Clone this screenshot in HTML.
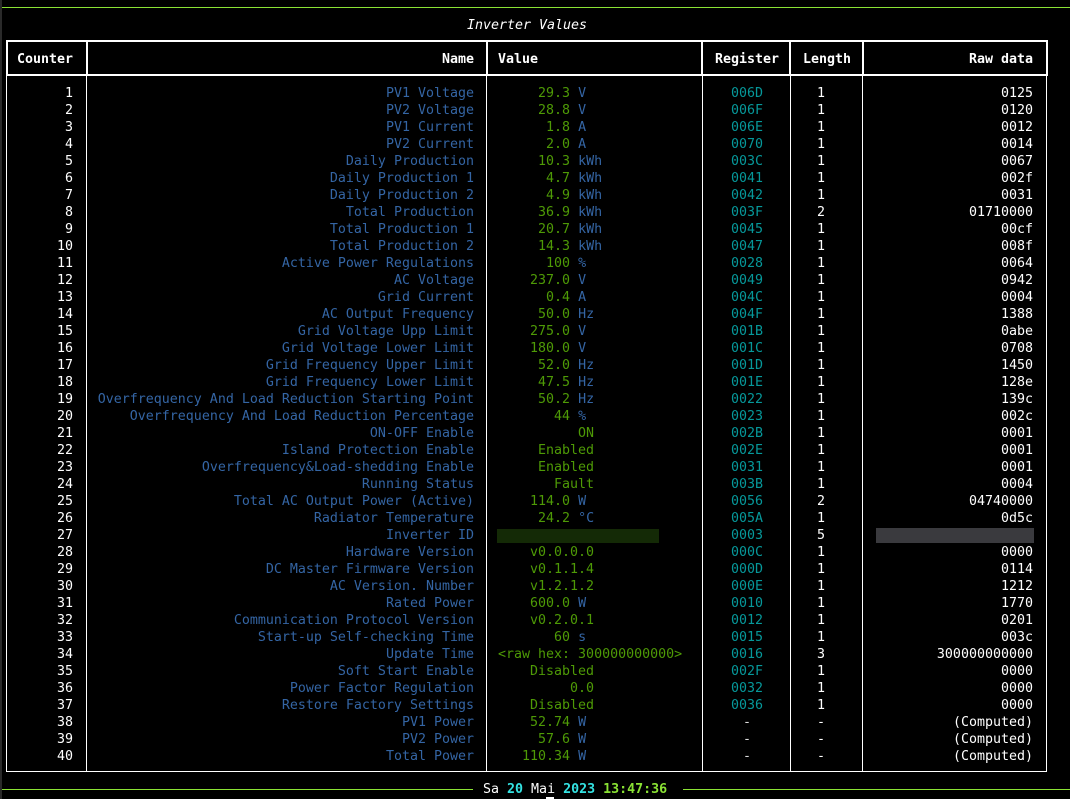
<!DOCTYPE html>
<html><head><meta charset="utf-8"><style>
html,body{margin:0;padding:0;background:#000;width:1070px;height:799px;overflow:hidden;}
body{position:relative;font-family:"DejaVu Sans Mono","Liberation Mono",monospace;font-size:13.3px;color:#fff;}
.a{position:absolute;white-space:pre;line-height:17px;}
#rows{position:absolute;left:0;top:85px;width:1070px;}
.r{position:relative;height:17px;}
.r span{position:absolute;top:0;white-space:pre;line-height:17px;}
.c{right:997px;color:#fff;}
.n{right:596px;color:#3465a4;}
.v{left:498px;color:#4e9a06;}
.v b{font-weight:normal;color:#3465a4;}
.g{left:703px;width:88px;text-align:center;color:#06989a;}
.l{left:791px;width:60px;text-align:center;color:#fff;}
.w{right:37px;color:#fff;}
.box{position:absolute;border:2px solid #fff;box-sizing:border-box;}
.vl{position:absolute;background:#fff;}
</style></head><body>
<div style="position:absolute;left:0;top:0;width:2px;height:799px;background:#2a2a2a"></div>
<div style="position:absolute;left:2px;top:7px;width:1068px;height:1px;background:#8ae234"></div>
<div class="a" style="left:0;width:1054px;top:17px;text-align:center;font-style:italic">Inverter Values</div>

<div class="box" style="left:6px;top:40px;width:1042px;height:36px"></div>
<div class="vl" style="left:86px;top:40px;width:2px;height:36px"></div>
<div class="vl" style="left:486px;top:40px;width:2px;height:36px"></div>
<div class="vl" style="left:701px;top:40px;width:2px;height:36px"></div>
<div class="vl" style="left:789px;top:40px;width:2px;height:36px"></div>
<div class="vl" style="left:862px;top:40px;width:2px;height:36px"></div>
<div class="a" style="top:51px;right:997px;font-weight:bold">Counter</div>
<div class="a" style="top:51px;right:596px;font-weight:bold">Name</div>
<div class="a" style="top:51px;left:498px;font-weight:bold">Value</div>
<div class="a" style="top:51px;left:703px;width:88px;text-align:center;font-weight:bold">Register</div>
<div class="a" style="top:51px;left:791px;width:72px;text-align:center;font-weight:bold">Length</div>
<div class="a" style="top:51px;right:37px;font-weight:bold">Raw data</div>

<div style="position:absolute;left:6px;top:75px;width:1041px;height:697px;border:1px solid #fff;border-top:none;box-sizing:border-box"></div>
<div class="vl" style="left:86px;top:76px;width:1px;height:696px"></div>
<div class="vl" style="left:486px;top:76px;width:1px;height:696px"></div>
<div class="vl" style="left:702px;top:76px;width:1px;height:696px"></div>
<div class="vl" style="left:790px;top:76px;width:1px;height:696px"></div>
<div class="vl" style="left:862px;top:76px;width:1px;height:696px"></div>

<div id="rows">
<div class="r"><span class="c">1</span><span class="n">PV1 Voltage</span><span class="v">     29.3 <b>V</b></span><span class="g">006D</span><span class="l">1</span><span class="w">0125</span></div>
<div class="r"><span class="c">2</span><span class="n">PV2 Voltage</span><span class="v">     28.8 <b>V</b></span><span class="g">006F</span><span class="l">1</span><span class="w">0120</span></div>
<div class="r"><span class="c">3</span><span class="n">PV1 Current</span><span class="v">      1.8 <b>A</b></span><span class="g">006E</span><span class="l">1</span><span class="w">0012</span></div>
<div class="r"><span class="c">4</span><span class="n">PV2 Current</span><span class="v">      2.0 <b>A</b></span><span class="g">0070</span><span class="l">1</span><span class="w">0014</span></div>
<div class="r"><span class="c">5</span><span class="n">Daily Production</span><span class="v">     10.3 <b>kWh</b></span><span class="g">003C</span><span class="l">1</span><span class="w">0067</span></div>
<div class="r"><span class="c">6</span><span class="n">Daily Production 1</span><span class="v">      4.7 <b>kWh</b></span><span class="g">0041</span><span class="l">1</span><span class="w">002f</span></div>
<div class="r"><span class="c">7</span><span class="n">Daily Production 2</span><span class="v">      4.9 <b>kWh</b></span><span class="g">0042</span><span class="l">1</span><span class="w">0031</span></div>
<div class="r"><span class="c">8</span><span class="n">Total Production</span><span class="v">     36.9 <b>kWh</b></span><span class="g">003F</span><span class="l">2</span><span class="w">01710000</span></div>
<div class="r"><span class="c">9</span><span class="n">Total Production 1</span><span class="v">     20.7 <b>kWh</b></span><span class="g">0045</span><span class="l">1</span><span class="w">00cf</span></div>
<div class="r"><span class="c">10</span><span class="n">Total Production 2</span><span class="v">     14.3 <b>kWh</b></span><span class="g">0047</span><span class="l">1</span><span class="w">008f</span></div>
<div class="r"><span class="c">11</span><span class="n">Active Power Regulations</span><span class="v">      100 <b>%</b></span><span class="g">0028</span><span class="l">1</span><span class="w">0064</span></div>
<div class="r"><span class="c">12</span><span class="n">AC Voltage</span><span class="v">    237.0 <b>V</b></span><span class="g">0049</span><span class="l">1</span><span class="w">0942</span></div>
<div class="r"><span class="c">13</span><span class="n">Grid Current</span><span class="v">      0.4 <b>A</b></span><span class="g">004C</span><span class="l">1</span><span class="w">0004</span></div>
<div class="r"><span class="c">14</span><span class="n">AC Output Frequency</span><span class="v">     50.0 <b>Hz</b></span><span class="g">004F</span><span class="l">1</span><span class="w">1388</span></div>
<div class="r"><span class="c">15</span><span class="n">Grid Voltage Upp Limit</span><span class="v">    275.0 <b>V</b></span><span class="g">001B</span><span class="l">1</span><span class="w">0abe</span></div>
<div class="r"><span class="c">16</span><span class="n">Grid Voltage Lower Limit</span><span class="v">    180.0 <b>V</b></span><span class="g">001C</span><span class="l">1</span><span class="w">0708</span></div>
<div class="r"><span class="c">17</span><span class="n">Grid Frequency Upper Limit</span><span class="v">     52.0 <b>Hz</b></span><span class="g">001D</span><span class="l">1</span><span class="w">1450</span></div>
<div class="r"><span class="c">18</span><span class="n">Grid Frequency Lower Limit</span><span class="v">     47.5 <b>Hz</b></span><span class="g">001E</span><span class="l">1</span><span class="w">128e</span></div>
<div class="r"><span class="c">19</span><span class="n">Overfrequency And Load Reduction Starting Point</span><span class="v">     50.2 <b>Hz</b></span><span class="g">0022</span><span class="l">1</span><span class="w">139c</span></div>
<div class="r"><span class="c">20</span><span class="n">Overfrequency And Load Reduction Percentage</span><span class="v">       44 <b>%</b></span><span class="g">0023</span><span class="l">1</span><span class="w">002c</span></div>
<div class="r"><span class="c">21</span><span class="n">ON-OFF Enable</span><span class="v">          ON</span><span class="g">002B</span><span class="l">1</span><span class="w">0001</span></div>
<div class="r"><span class="c">22</span><span class="n">Island Protection Enable</span><span class="v">     Enabled</span><span class="g">002E</span><span class="l">1</span><span class="w">0001</span></div>
<div class="r"><span class="c">23</span><span class="n">Overfrequency&amp;Load-shedding Enable</span><span class="v">     Enabled</span><span class="g">0031</span><span class="l">1</span><span class="w">0001</span></div>
<div class="r"><span class="c">24</span><span class="n">Running Status</span><span class="v">       Fault</span><span class="g">003B</span><span class="l">1</span><span class="w">0004</span></div>
<div class="r"><span class="c">25</span><span class="n">Total AC Output Power (Active)</span><span class="v">    114.0 <b>W</b></span><span class="g">0056</span><span class="l">2</span><span class="w">04740000</span></div>
<div class="r"><span class="c">26</span><span class="n">Radiator Temperature</span><span class="v">     24.2 <b>°C</b></span><span class="g">005A</span><span class="l">1</span><span class="w">0d5c</span></div>
<div class="r"><span class="c">27</span><span class="n">Inverter ID</span><span style="left:497px;top:2px;width:162px;height:14px;background:#142a06"></span><span class="g">0003</span><span class="l">5</span><span style="left:876px;top:1px;width:158px;height:15px;background:#3a3a3e"></span></div>
<div class="r"><span class="c">28</span><span class="n">Hardware Version</span><span class="v">    v0.0.0.0</span><span class="g">000C</span><span class="l">1</span><span class="w">0000</span></div>
<div class="r"><span class="c">29</span><span class="n">DC Master Firmware Version</span><span class="v">    v0.1.1.4</span><span class="g">000D</span><span class="l">1</span><span class="w">0114</span></div>
<div class="r"><span class="c">30</span><span class="n">AC Version. Number</span><span class="v">    v1.2.1.2</span><span class="g">000E</span><span class="l">1</span><span class="w">1212</span></div>
<div class="r"><span class="c">31</span><span class="n">Rated Power</span><span class="v">    600.0 <b>W</b></span><span class="g">0010</span><span class="l">1</span><span class="w">1770</span></div>
<div class="r"><span class="c">32</span><span class="n">Communication Protocol Version</span><span class="v">    v0.2.0.1</span><span class="g">0012</span><span class="l">1</span><span class="w">0201</span></div>
<div class="r"><span class="c">33</span><span class="n">Start-up Self-checking Time</span><span class="v">       60 <b>s</b></span><span class="g">0015</span><span class="l">1</span><span class="w">003c</span></div>
<div class="r"><span class="c">34</span><span class="n">Update Time</span><span class="v">&lt;raw hex: 300000000000&gt;</span><span class="g">0016</span><span class="l">3</span><span class="w">300000000000</span></div>
<div class="r"><span class="c">35</span><span class="n">Soft Start Enable</span><span class="v">    Disabled</span><span class="g">002F</span><span class="l">1</span><span class="w">0000</span></div>
<div class="r"><span class="c">36</span><span class="n">Power Factor Regulation</span><span class="v">         0.0</span><span class="g">0032</span><span class="l">1</span><span class="w">0000</span></div>
<div class="r"><span class="c">37</span><span class="n">Restore Factory Settings</span><span class="v">    Disabled</span><span class="g">0036</span><span class="l">1</span><span class="w">0000</span></div>
<div class="r"><span class="c">38</span><span class="n">PV1 Power</span><span class="v">    52.74 <b>W</b></span><span class="g" style="color:#ddd">-</span><span class="l">-</span><span class="w">(Computed)</span></div>
<div class="r"><span class="c">39</span><span class="n">PV2 Power</span><span class="v">     57.6 <b>W</b></span><span class="g" style="color:#ddd">-</span><span class="l">-</span><span class="w">(Computed)</span></div>
<div class="r"><span class="c">40</span><span class="n">Total Power</span><span class="v">   110.34 <b>W</b></span><span class="g" style="color:#ddd">-</span><span class="l">-</span><span class="w">(Computed)</span></div>
</div>

<div style="position:absolute;left:2px;top:789px;width:471px;height:1px;background:#8ae234"></div>
<div style="position:absolute;left:683px;top:789px;width:387px;height:1px;background:#8ae234"></div>
<div class="a" style="left:483px;top:781px">Sa <span style="color:#34e2e2;font-weight:bold">20</span> Mai <span style="color:#34e2e2;font-weight:bold">2023</span> <span style="color:#8ae234;font-weight:bold">13:47:36</span></div>
<div style="position:absolute;left:546px;top:797px;width:8px;height:2px;background:#fff"></div>
</body></html>
